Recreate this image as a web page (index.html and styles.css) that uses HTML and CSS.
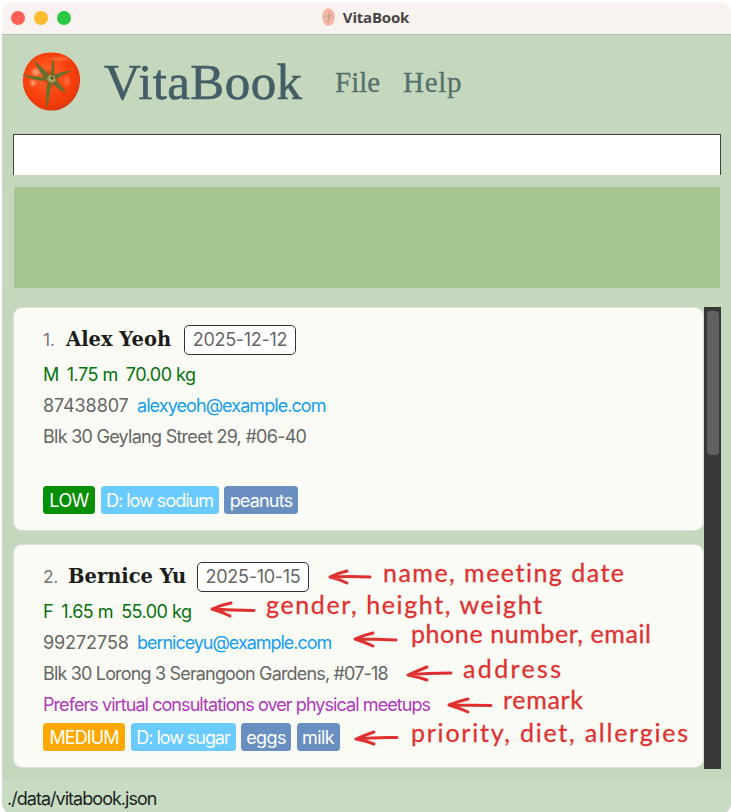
FILE: index.html
```html
<!DOCTYPE html>
<html lang="en">
<head>
<meta charset="utf-8">
<title>VitaBook</title>
<link rel="stylesheet" href="styles.css">
</head>
<body>
<div class="window">
  <header class="titlebar">
    <div class="lights"><i class="red"></i><i class="yellow"></i><i class="green"></i></div>
    <div class="window-title">
      <svg class="mini" viewBox="0 0 13 18"><ellipse cx="6.5" cy="9" rx="6.3" ry="8.7" fill="#f6b3a0"/><ellipse cx="4" cy="7" rx="1.6" ry="3" fill="#f9c9b9"/><path d="M2.5 4.500L6.500 8.500 10.500 6.500M6.500 8.500L6 15M6.500 8.500L7 4M1 8L6.500 8.500 9.500 11" fill="none" stroke="#b0a083" stroke-width=".8"/></svg>
      <span>VitaBook</span>
    </div>
  </header>
  <nav class="brand">
    <svg class="tomato" viewBox="0 0 60 60">
      <defs>
        <radialGradient id="skin" cx=".42" cy=".4" r=".62"><stop offset="0" stop-color="#ff6a32"/><stop offset=".55" stop-color="#fa4510"/><stop offset=".85" stop-color="#f03a08"/><stop offset="1" stop-color="#d43a18"/></radialGradient>
        <filter id="soft"><feGaussianBlur stdDeviation="1.3"/></filter>
      </defs>
      <path d="M19 2C27-.5 39 0 46 5C54 10 59 20 58 30C57 43 49 53 39 57C31 60 19 59 12 52C4 45 0 36 1 26C2 15 9 5 19 2Z" fill="url(#skin)"/>
      <g filter="url(#soft)" fill="#ff9a70"><ellipse cx="14" cy="20" rx="4" ry="3"/><ellipse cx="11" cy="31" rx="2.5" ry="3"/><ellipse cx="38" cy="7" rx="9" ry="1.500" opacity=".6"/><ellipse cx="45" cy="29" rx="3" ry="5" opacity=".4"/></g>
      <path d="M20 20Q29 17 36 24Q38 31 30 34Q21 33 20 20Z" fill="#8f2605" opacity=".45" filter="url(#soft)"/>
      <g fill="#66702c"><path d="M29 25C24 19 17 13 11 7C17 19 21 25 27 28Z"/><path d="M27 26C20 25 10 25 0 22C9 28 18 30 28 28Z"/><path d="M27 27C23 37 24 47 25 57C28 46 27 37 31 29Z"/><path d="M29 28C32 34 37 38 44 41C41 35 36 29 32 26Z"/><path d="M30 25C36 20 43 19 50 19C43 22 37 24 32 29Z"/><path d="M29 25C29 18 30 11 31 6C33 13 32 20 32 26Z"/></g>
      <path d="M27 23L32 24 34 29 29 31 25 28Z" fill="#a99c5c"/><path d="M29 25L31 27" stroke="#373d13" stroke-width="2"/>
    </svg>
    <h1>VitaBook</h1>
    <span class="menu file">File</span>
    <span class="menu help">Help</span>
  </nav>
  <div class="command"></div>
  <div class="result"></div>
  <main class="list">
    <div class="cards">
      <article class="card">
        <div class="row head"><span class="num n1">1.</span><b class="name a">Alex Yeoh</b><span class="date">2025-12-12</span></div>
        <div class="row body-stats"><span>M</span><span>1.75 m</span><span>70.00 kg</span></div>
        <div class="row"><span class="phone">87438807</span><span class="email e1">alexyeoh@example.com</span></div>
        <div class="row addr1">Blk 30 Geylang Street 29, #06-40</div>
        <div class="row remark"></div>
        <div class="tags"><span class="tag low">LOW</span><span class="tag diet sodium">D: low sodium</span><span class="tag allergy peanuts">peanuts</span></div>
      </article>
      <article class="card">
        <div class="row head"><span class="num n2">2.</span><b class="name b">Bernice Yu</b><span class="date">2025-10-15</span></div>
        <div class="row body-stats"><span>F</span><span>1.65 m</span><span>55.00 kg</span></div>
        <div class="row"><span class="phone">99272758</span><span class="email e2">berniceyu@example.com</span></div>
        <div class="row addr2">Blk 30 Lorong 3 Serangoon Gardens, #07-18</div>
        <div class="row remark">Prefers virtual consultations over physical meetups</div>
        <div class="tags"><span class="tag medium">MEDIUM</span><span class="tag diet sugar">D: low sugar</span><span class="tag allergy eggs">eggs</span><span class="tag allergy milk">milk</span></div>
      </article>
    </div>
    <div class="scroll"><div class="thumb"></div></div>
  </main>
  <footer class="status">./data/vitabook.json</footer>
</div>
<svg class="notes" viewBox="0 0 731 812">
  <g class="arrows">
    <path d="M370 577Q350 576 330 577M347 571Q338 573 330 577Q339 579 347 583"/>
    <path d="M254 610.500Q231 610 212 609M231 603Q221 605 212 609Q222 612 230 616"/>
    <path d="M396 640Q375 639 355 639M373 633Q364 635 355 639Q364 642 373 646"/>
    <path d="M451 673Q427 673 408 675M427 667Q417 671 408 675Q418 677 427 680"/>
    <path d="M491 705.500Q469 705 449 705M468 699Q459 701 449 705Q459 708 468 712"/>
    <path d="M397 737.500Q375 737 356 739M374 732Q365 735 356 739Q366 741 374 744"/>
  </g>
  <text x="383" y="582" textLength="241">name, meeting date</text>
  <text x="266" y="614" textLength="276">gender, height, weight</text>
  <text x="411" y="643" textLength="240">phone number, email</text>
  <text x="463" y="678" textLength="98">address</text>
  <text x="503" y="709" textLength="80">remark</text>
  <text x="411" y="742" textLength="277">priority, diet, allergies</text>
</svg>
</body>
</html>
```
FILE: styles.css
```css
* { box-sizing: border-box; }
body { margin: 0; width: 731px; height: 812px; background: #fff; overflow: hidden; position: relative; font: 18px/31px Inter, sans-serif; color: #666; }
.window { margin-left: 2px; height: 812px; padding-top: 2px; display: flex; flex-direction: column; background: linear-gradient(#fff 0 30px, #c5d8bd 30px); border-radius: 13px 13px 11px 11px; }
.titlebar { height: 33px; flex: none; background: #f8f3f0; border-bottom: 1px solid #b4c1ac; border-radius: 11px 11px 0 0; display: grid; grid-template-columns: 1fr auto 1fr; align-items: center; }
.lights { display: flex; gap: 9px; padding-left: 9px; }
.lights i { width: 14px; height: 14px; border-radius: 50%; }
.red { background: #ff5f57; } .yellow { background: #febc2e; } .green { background: #28c840; }
.window-title { display: flex; align-items: center; gap: 8px; margin: -2px 2px 0 0; font: bold 15px/18px "Open Sans", sans-serif; color: #484443; letter-spacing: -.2px; }
.mini { width: 13px; height: 18px; }
.brand { height: 99px; flex: none; background: #c5d8bd; display: flex; align-items: center; padding: 0 0 5px 20px; font-family: "Liberation Serif", serif; color: #435e66; }
.tomato { width: 60px; height: 60px; }
h1 { margin: 0 0 0 22px; font-size: 51px; font-weight: 400; line-height: 60px; width: 209px; letter-spacing: .4px; -webkit-text-stroke: .6px #435e66; }
.menu { margin-left: 22px; font-size: 29px; line-height: 34px; color: #55716e; -webkit-text-stroke: .3px #55716e; }
.file { width: 46px; }
.help { letter-spacing: .7px; }
.command { height: 41px; flex: none; background: #fff; border: 1px solid #3d433c; border-bottom: 0; margin: 0 10px 0 11px; }
.result { height: 101px; flex: none; background: #a8c692; margin: 12px 11px 0 12px; }
.list { display: flex; height: 462px; flex: none; margin: 19px 10px 0 11px; }
.cards { width: 691px; display: flex; flex-direction: column; gap: 13px; }
.card { height: 224px; flex: none; background: #fafbf5; border: 1px solid #d9e0d7; border-radius: 9px; padding: 12px 28px 0 29px; }
.row { height: 31px; display: flex; align-items: center; white-space: nowrap; letter-spacing: -.6px; }
.row.head { height: 39px; }
.num { font-size: 17.500px; color: #777; letter-spacing: -.3px; }
.n1 { width: 23px; } .n2 { width: 25px; }
.name { font: bold 19.500px/30px "DejaVu Serif", serif; color: #1c1c1a; letter-spacing: 0; }
.a { width: 118px; } .b { width: 129px; }
.date { height: 30px; width: 112px; display: flex; align-items: center; justify-content: center; border: 1.500px solid #303030; border-radius: 5px; background: #fff; letter-spacing: -.3px; }
.body-stats { gap: 8px; color: #07700f; letter-spacing: -.5px; }
.phone { width: 94px; letter-spacing: -.1px; }
.email { color: #159df0; }
.e1 { letter-spacing: -.93px; }
.e2 { letter-spacing: -1.03px; }
.addr1 { letter-spacing: -.73px; }
.addr2 { letter-spacing: -.83px; }
.remark { color: #b038bd; letter-spacing: -.93px; }
.tags { display: flex; gap: 5.500px; height: 34px; align-items: center; }
.tag { height: 28px; border-radius: 3.500px; color: #fff; display: flex; align-items: center; justify-content: center; white-space: nowrap; letter-spacing: -.6px; }
.low { width: 52px; background: #079006; }
.medium { width: 82px; background: #ffa800; letter-spacing: -.9px; }
.diet { background: #69cbff; }
.sodium { width: 118px; letter-spacing: -1px; }
.sugar { width: 105px; letter-spacing: -1.050px; }
.allergy { background: #698fc1; }
.peanuts { width: 74px; letter-spacing: -.8px; } .eggs { width: 50px; } .milk { width: 43px; }
.scroll { width: 17px; background: #383838; padding: 4px 2px 0 3px; }
.thumb { height: 144px; background: #606060; border-radius: 4px; }
.status { margin-top: 12px; flex: 1; background: #c8dcc3; border-radius: 0 0 11px 11px; padding: 2px 0 0 5px; color: #222; letter-spacing: -.97px; }
.notes { position: absolute; left: 0; top: 0; width: 731px; height: 812px; pointer-events: none; }
.notes text { font: 25px Lato, sans-serif; font-variant-ligatures: none; fill: #e03131; stroke: #e03131; stroke-width: .3px; }
.arrows { fill: none; stroke: #e03131; stroke-width: 3px; stroke-linecap: round; stroke-linejoin: round; }
```
